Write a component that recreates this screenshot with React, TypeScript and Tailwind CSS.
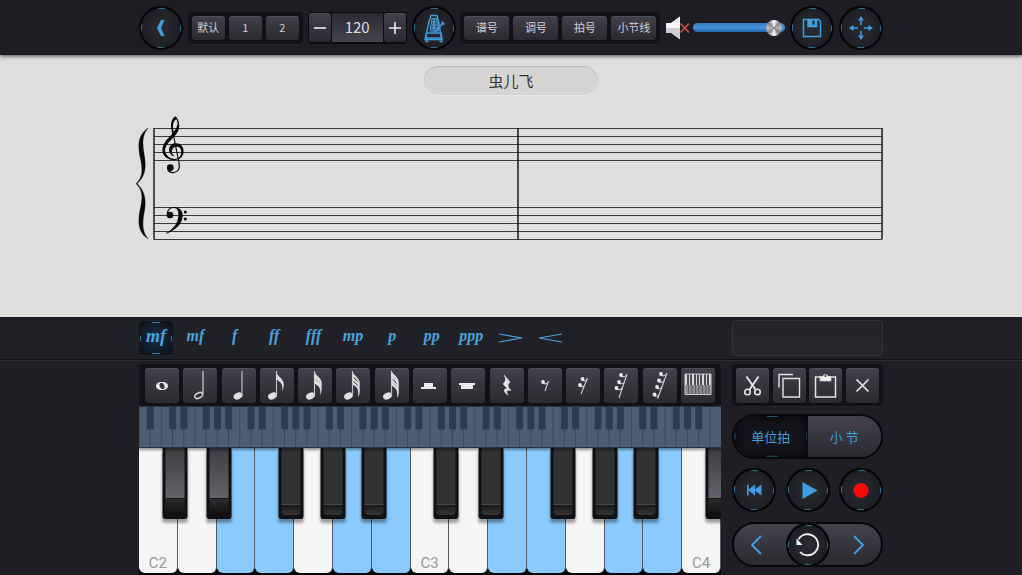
import { ReactNode, useState } from "react";

const PANEL = "rounded bg-[#111116] shadow-[0_1px_0_rgba(255,255,255,0.04)]";
const KEYCAP =
  "flex items-center justify-center rounded-[3px] bg-linear-to-b from-[#42414c] to-[#2b2a31] text-[#cfcfd4] shadow-[inset_0_1px_0_rgba(255,255,255,0.08)]";
const BLUE = "#3f9fdf";

const RoundButton = ({ label, children }: { label: string; children: ReactNode }) => (
  <button aria-label={label} className="size-11 shrink-0 rounded-full bg-radial from-[#2b2c32] to-[#17181d]">
    <svg viewBox="0 0 44 44" className="size-11" fill="none">
      <circle cx="22" cy="22" r="20.8" stroke="#050507" strokeWidth="2.2" />
      <circle
        cx="22"
        cy="22"
        r="19.6"
        stroke="#37729a"
        strokeWidth="1"
        strokeDasharray="7 23.8"
        strokeDashoffset="3.5"
      />
      {children}
    </svg>
  </button>
);

const TextButtons = ({ items, width }: { items: string[]; width: string }) => (
  <div className={`flex h-8 shrink-0 items-center gap-1 px-1 ${PANEL}`}>
    {items.map((item) => (
      <button key={item} className={`${KEYCAP} ${width} h-6 text-[11px]`}>
        {item}
      </button>
    ))}
  </div>
);

const Toolbar = () => {
  const [tempo, setTempo] = useState(120);
  const [volume, setVolume] = useState(96);

  return (
    <header className="relative z-10 bg-[#1e1d23] shadow-[0_1px_4px_rgba(0,0,0,0.7)]">
      <div className="mx-auto flex h-[55px] w-full max-w-[744px] items-center justify-between">
        <RoundButton label="返回">
          <path d="M22 14h3.5l-3.500 8 3.500 8H22l-4-8z" fill={BLUE} />
        </RoundButton>
        <TextButtons items={["默认", "1", "2"]} width="w-[33px]" />
        <div className="flex h-8 shrink-0 items-center gap-px rounded bg-[#0c0c10] p-px">
          <button
            aria-label="减速"
            className={`${KEYCAP} h-[29px] w-[22px]`}
            onClick={() => setTempo(tempo - 1)}
          >
            <svg viewBox="0 0 14 14" className="size-3.5" stroke="#ececee" strokeWidth="1.6">
              <path d="M1 7h12" />
            </svg>
          </button>
          <output className="grid h-[29px] w-[51px] place-items-center bg-linear-to-b from-[#2c2b33] to-[#45444f] text-[15px] text-[#dedee2]">
            {tempo}
          </output>
          <button
            aria-label="加速"
            className={`${KEYCAP} h-[29px] w-[22px]`}
            onClick={() => setTempo(tempo + 1)}
          >
            <svg viewBox="0 0 14 14" className="size-3.5" stroke="#ececee" strokeWidth="1.6">
              <path d="M1 7h12M7 1v12" />
            </svg>
          </button>
        </div>
        <RoundButton label="节拍器">
          <g stroke={BLUE} strokeWidth="1.4" strokeLinejoin="round">
            <path d="M19 9.500h6l1.500 6L29.500 32h-16l3.500-16.500z" />
            <path d="M14.500 27h14.500l1 6.500h-17zM14 34v1.500h2.500M30 34v1.500h-2.500" />
            <path d="M20 12.500h4.500l2 12.500h-8.500z" fill="#28577a" strokeWidth="1" />
            <path d="M22 13v11M20.500 16h3M20 19h4M19.500 22h5" stroke="#7cc2ef" strokeWidth=".7" />
            <path d="M23 26l8-9M29.500 16l3 2.500" strokeWidth="1.7" />
          </g>
        </RoundButton>
        <TextButtons items={["谱号", "调号", "拍号", "小节线"]} width="w-[45px]" />
        <div className="flex shrink-0 items-center gap-[3px]">
          <button aria-label="静音">
            <svg viewBox="0 0 25 24" className="h-6 w-[25px]">
              <path d="M1 7h5l9-6.500v23L6 17H1z" fill="#cfcfcf" />
              <path d="M1 7h5l9-6.500v11.500H1z" fill="#f4f4f4" />
              <path d="M15.500 7.500l8.500 9M24 7.500l-8.500 9" stroke="#d2524b" strokeWidth="1.5" />
            </svg>
          </button>
          <input
            type="range"
            aria-label="音量"
            min={0}
            max={100}
            value={volume}
            onChange={(e) => setVolume(Number(e.target.value))}
            className="h-[9px] w-[92px] appearance-none rounded-full bg-linear-to-b from-[#3478bb] via-[#4794dc] to-[#2465b0] [&::-webkit-slider-thumb]:size-4 [&::-webkit-slider-thumb]:appearance-none [&::-webkit-slider-thumb]:rounded-full [&::-webkit-slider-thumb]:bg-[conic-gradient(#fff,#888_45deg,#bbb_90deg,#777_135deg,#fff_180deg,#888_225deg,#bbb_270deg,#888_315deg,#fff)]"
          />
        </div>
        <RoundButton label="保存">
          <g stroke={BLUE} strokeWidth="1.5">
            <path d="M13.500 13.500h15l2 2v15h-17z" />
            <path d="M18 14v6.500h8.500V14" fill={BLUE} />
            <path d="M23.500 14.500v4" stroke="#14202c" strokeWidth="2" />
          </g>
        </RoundButton>
        <RoundButton label="移动">
          <path
            d="M22 10l3 4.500h-6zM22 34l3-4.500h-6zM10 22l4.500-3v6zM34 22l-4.500-3v6z"
            fill={BLUE}
          />
          <path d="M22 14v5M22 25v5M14 22h5M25 22h5" stroke={BLUE} strokeWidth="1.5" />
        </RoundButton>
      </div>
    </header>
  );
};

const Score = () => (
  <section className="flex flex-col items-center bg-linear-to-b from-[#dfdedc] to-[#e1e0de] pt-[11px] pb-[75px]">
    <input
      aria-label="曲名"
      defaultValue="虫儿飞"
      className="h-[29px] w-[174px] rounded-full bg-[#d6d5d3] text-center text-[15px] text-[#333] shadow-[inset_0_1px_1px_rgba(0,0,0,0.15),0_1px_0_rgba(255,255,255,0.3)]"
    />
    <svg viewBox="136 115 750 127" className="mt-5 w-full max-w-[750px]" role="img" aria-label="五线谱">
      <g stroke="#3a3a3a" strokeWidth="1">
        {[128, 136, 144, 152, 160, 207, 215, 223, 231, 239].map((y) => (
          <path key={y} d={`M154 ${y + 0.5}H882`} />
        ))}
      </g>
      <path d="M154 128V239.500M518 128V239.500M882 128V239.500" stroke="#1c1c1c" strokeWidth="1.5" />
      {/* clefs and brace are drawn on a grid three times finer than the staff */}
      <g transform="translate(130 60) scale(.33333)" fill="#0a0a0a">
        <path
          d="M55 204C36 224 37 250 42 280C49 320 48 345 22 371C48 397 49 425 42 460C37 490 36 516 55 537C26 520 23 490 29 455C37 420 42 392 18 371C42 350 37 320 29 285C23 250 26 222 55 204Z"
          stroke="#0a0a0a"
        />
        <path
          fillRule="evenodd"
          d="M136 169C148 178 151 200 144 214C138 227 126 236 117 247C105 261 102 272 109 283C117 296 132 299 143 295C155 290 156 272 150 264C145 259 138 259 133 262C124 267 124 281 131 286C134 288 133 290 129 288C115 282 113 262 124 254C135 246 152 249 158 261C164 274 160 293 146 298C130 304 108 299 100 283C94 268 98 254 110 239C118 230 124 224 127 221C120 198 122 177 136 169ZM139 178C129 183 127 198 131 215C142 202 146 190 139 178Z"
        />
        <path
          d="M129 219L147 308C151 328 143 337 130 338C121 338 114 333 113 325"
          fill="none"
          stroke="#0a0a0a"
          strokeWidth="3.5"
        />
        <circle cx="121" cy="323" r="10" />
        <path d="M111 466C109 450 118 441 132 441C150 441 159 453 158 468C157 492 137 510 109 521L108 519C130 507 144 490 145 467C146 452 141 444 131 444C122 444 115 450 115 458Z" />
        <circle cx="120" cy="465" r="10" />
        <circle cx="166" cy="456" r="4.5" />
        <circle cx="166" cy="477" r="4.5" />
      </g>
    </svg>
  </section>
);

const dynamics = ["mf", "mf", "f", "ff", "fff", "mp", "p", "pp", "ppp"];

const Dynamics = () => (
  <div className="flex w-full max-w-[428px] items-center justify-between">
    {dynamics.map((mark, i) =>
      i === 0 ? (
        <button
          key={i}
          className="relative size-[34px] rounded bg-radial from-[#17324a] to-[#0c0d12] pb-1 font-['Liberation_Serif',serif] text-[18px] leading-none font-bold text-[#4aa3de] italic"
        >
          {mark}
          <svg viewBox="0 0 34 34" className="absolute inset-0" stroke="#37729a">
            <path d="M13 1.500h8M13 32.500h8M1.500 15v5M32.500 15v5" />
          </svg>
        </button>
      ) : (
        <button
          key={i}
          className="h-[34px] w-[34px] pb-1 font-['Liberation_Serif',serif] text-[16px] leading-none font-bold text-[#4aa3de] italic"
        >
          {mark}
        </button>
      ),
    )}
    <button aria-label="渐弱" className="grid size-[34px] place-items-center">
      <svg viewBox="0 0 24 10" className="h-2.5 w-6" stroke="#4aa3de" strokeWidth="1.2" fill="none">
        <path d="M0 1l23 4-23 4" />
      </svg>
    </button>
    <button aria-label="渐强" className="grid size-[34px] place-items-center">
      <svg viewBox="0 0 24 10" className="h-2.5 w-6" stroke="#4aa3de" strokeWidth="1.2" fill="none">
        <path d="M24 1L1 5l23 4" />
      </svg>
    </button>
  </div>
);

const NoteHead = ({ x }: { x: number }) => (
  <ellipse cx={x} cy="28" rx="4.6" ry="3.2" transform={`rotate(-25 ${x} 28)`} fill="#e0e0e0" />
);

const Flagged = ({ flags }: { flags: number[] }) => (
  <>
    <NoteHead x={12.5} />
    <path d="M16.500 3v25" stroke="#bdbdbd" strokeWidth="1.2" />
    {flags.map((y) => (
      <path
        key={y}
        d={`M16.500 ${y}c.5 4 6 6 7 10.500c.6 3 0 6-1.500 ${flags.length > 2 ? 7 : 9}c.8-5 .5-9-5.500-12z`}
        fill="#dedede"
      />
    ))}
  </>
);

const Rest = ({ dots, stem }: { dots: [number, number][]; stem: [number, number, number, number] }) => {
  const [x1, y1, x2, y2] = stem;
  const at = (y: number) => x1 + ((x2 - x1) * (y - y1)) / (y2 - y1);
  return (
    <g stroke="#cfcfcf" strokeWidth="1.1" fill="none">
      <path d={`M${x1} ${y1}L${x2} ${y2}`} />
      {dots.map(([x, y]) => (
        <g key={y}>
          <path d={`M${x} ${y + 1}Q${x + 3} ${y + 3} ${at(y)} ${y}`} />
          <circle cx={x} cy={y} r="1.9" fill="#ececec" stroke="none" />
        </g>
      ))}
    </g>
  );
};

const notes: [string, ReactNode][] = [
  [
    "全音符",
    <path
      fillRule="evenodd"
      fill="#ececec"
      d="M17 14c4 0 6 1.800 6 4s-2 4-6 4-6-1.800-6-4 2-4 6-4zm-.6.800c-2 .2-2.400 1.800-1.600 3.700.8 1.800 2 2.700 3.200 2.600 1.600-.2 2-1.700 1.200-3.700-.7-1.800-1.700-2.700-2.800-2.600z"
    />,
  ],
  [
    "二分音符",
    <g fill="none" stroke="#d0d0d0">
      <path d="M20 3v23" strokeWidth="1.2" />
      <ellipse cx="15.7" cy="27.5" rx="4.2" ry="2.5" transform="rotate(-27 15.700 27.500)" strokeWidth="1.5" />
    </g>,
  ],
  [
    "四分音符",
    <>
      <NoteHead x={16} />
      <path d="M20 3v25" stroke="#bdbdbd" strokeWidth="1.2" />
    </>,
  ],
  ["八分音符", <Flagged flags={[4]} />],
  ["十六分音符", <Flagged flags={[3, 8]} />],
  ["三十二分音符", <Flagged flags={[3, 7, 11]} />],
  ["六十四分音符", <Flagged flags={[2, 5, 9, 12]} />],
  ["二分休止符", <path d="M11 15h9v4h3v2H8v-2h3z" fill="#ececec" />],
  ["全休止符", <path d="M8 15h16v2h-2v4H10v-4H8z" fill="#ececec" />],
  [
    "四分休止符",
    <path
      d="M14 7l6 7c-3 3-2.500 5 1 8.500-4-1-5.500.5-3 4.500-5-3-5-7 0-6l-5-5c3-3 3.500-5 1-9z"
      fill="#e6e6e6"
      stroke="#e6e6e6"
      strokeWidth=".6"
    />,
  ],
  ["八分休止符", <Rest dots={[[15, 14]]} stem={[20.5, 13, 17, 23]} />],
  ["十六分休止符", <Rest dots={[[16.5, 11], [14, 17]]} stem={[21.5, 10, 15, 26]} />],
  ["三十二分休止符", <Rest dots={[[17, 7], [15, 14], [12.5, 20]]} stem={[23, 6, 15, 30]} />],
  ["六十四分休止符", <Rest dots={[[18, 6], [16, 12.5], [14, 19], [11.5, 26.5]]} stem={[24, 5, 14.5, 31]} />],
  [
    "键盘",
    <>
      <path d="M4 6h26v20.500H4z" fill="#dcdcde" />
      <path d="M4 17h26v9.500H4z" fill="#8b8a90" />
      <path
        d="M7.500 17v9M11 17v9M14.500 17v9M18 17v9M21.500 17v9M25 17v9M28 17v9"
        stroke="#5c5b62"
        strokeWidth="1"
      />
      <path
        d="M7 6v11M10 6v11M14 6v11M17 6v11M20 6v11M24 6v11M27 6v11"
        stroke="#1c1b20"
        strokeWidth="1.5"
      />
      <path d="M4 6h26v20.500H4z" fill="none" stroke="#c8c8cb" strokeWidth="1" />
    </>,
  ],
];

const NotePalette = () => (
  <div className={`flex h-[42px] items-center justify-between px-1.5 ${PANEL}`}>
    {notes.map(([label, glyph]) => (
      <button key={label} aria-label={label} className={`${KEYCAP} h-[35px] w-[34px]`}>
        <svg viewBox="0 0 34 35" className="h-[35px] w-[34px]">
          {glyph}
        </svg>
      </button>
    ))}
  </div>
);

// the overview runs over 88 keys, from A0 to C8
const overviewWhite = Array.from({ length: 52 }, (_, i) => i);
const overviewBlack = overviewWhite.filter((i) => i > 0 && ![2, 5].includes(i % 7));

const Overview = () => (
  <svg
    viewBox="0 0 520 41"
    preserveAspectRatio="none"
    className="h-[42px] w-full border-y border-[#28344a] bg-[#505c70]"
  >
    {overviewWhite.map((i) => (
      <path key={i} d={`M${i * 10} 0v41`} stroke="#36445a" strokeWidth=".8" />
    ))}
    {overviewBlack.map((i) => (
      <rect key={i} x={i * 10 - 3} y="0" width="6.2" height="23" fill="#2d3a50" />
    ))}
  </svg>
);

const whiteKeys = "C2 D2 E2 F2 G2 A2 B2 C3 D3 E3 F3 G3 A3 B3 C4".split(" ");
const inScale = ["E", "F", "A", "B"];
const blackOffsets = [0.131, 0.2946, 0.56, 0.714, 0.867];
const blackKeys = Array.from({ length: 11 }, (_, i) => ({
  center: ((Math.floor(i / 5) + blackOffsets[i % 5]) * 7 * 100) / 15,
  bright: i < 2 || i === 10,
}));

const Piano = () => (
  <div className="relative flex min-h-[120px] flex-1 overflow-hidden bg-black pb-0.5">
    {whiteKeys.map((key) => (
      <button
        key={key}
        aria-label={key}
        className={`flex flex-1 items-end justify-center rounded-b-md border-r border-[#565b62] pb-0.5 font-[Roboto,sans-serif] text-[15px] leading-4 text-[#999] ${
          inScale.includes(key[0]) ? "bg-[#8bcaff]" : "bg-[#f5f5f5]"
        }`}
      >
        {key[0] === "C" && key}
      </button>
    ))}
    {blackKeys.map(({ center, bright }) => (
      <button
        key={center}
        aria-label="黑键"
        className="absolute top-0 flex h-[56%] w-[25px] -translate-x-1/2 flex-col rounded-b-[3px] bg-[#111113] px-[3px] pb-1 shadow-[0_4px_3px_rgba(0,0,0,0.35)]"
        style={{ left: `${center}%` }}
      >
        <span
          className={`w-full flex-1 border-b ${
            bright
              ? "border-[#17171a] bg-linear-to-b from-[#3d3d42] to-[#63636a]"
              : "border-[#47484a] bg-[#303133]"
          }`}
        />
        <span
          className={`w-full rounded-b-sm bg-linear-to-b ${
            bright ? "h-4 from-[#2e2e30] to-[#0e0e10]" : "h-2.5 from-[#1a1a1c] to-[#353538]"
          }`}
        />
      </button>
    ))}
    <div className="pointer-events-none absolute inset-x-0 top-0 h-1 bg-linear-to-b from-black/40 to-transparent" />
  </div>
);

const EditTools = () => (
  <div className={`flex h-[42px] items-center justify-between px-1 ${PANEL}`}>
    <button aria-label="剪切" className={`${KEYCAP} h-[35px] w-[33px]`}>
      <svg viewBox="0 0 33 35" className="h-[35px] w-[33px]" fill="none" stroke="#e4e4e4" strokeWidth="1.6">
        <circle cx="11.5" cy="24" r="2.8" />
        <circle cx="21.5" cy="24" r="2.8" />
        <path d="M10.500 8.500L19.800 22M22.500 8.500L13.200 22" strokeWidth="1.9" />
      </svg>
    </button>
    <button aria-label="复制" className={`${KEYCAP} h-[35px] w-[33px]`}>
      <svg viewBox="0 0 33 35" className="h-[35px] w-[33px]" fill="none" stroke="#e4e4e4" strokeWidth="1.4">
        <path d="M10 10.500h16.500v18.500H10z" />
        <path d="M6 19.500V6.500h14" />
      </svg>
    </button>
    <button aria-label="粘贴" className={`${KEYCAP} h-[35px] w-[33px]`}>
      <svg viewBox="0 0 33 35" className="h-[35px] w-[33px]" fill="none" stroke="#e4e4e4" strokeWidth="1.5">
        <path d="M6.500 9h20v20h-20z" />
        <path d="M11.500 9h3a2 2 0 0 1 4 0h3v3.500h-10z" fill="#f4f4f4" />
        <circle cx="16.5" cy="8" r="1" fill="#333" stroke="none" />
      </svg>
    </button>
    <button aria-label="删除" className={`${KEYCAP} h-[35px] w-[33px]`}>
      <svg viewBox="0 0 33 35" className="h-[35px] w-[33px]" stroke="#e4e4e4" strokeWidth="1.7">
        <path d="M10.500 11.500l12 12M22.500 11.500l-12 12" />
      </svg>
    </button>
  </div>
);

const Transport = () => (
  <div className="flex flex-col">
    <EditTools />
    <div className="mt-2 flex h-[45px] overflow-hidden rounded-full border-2 border-[#08080b] text-[13px] text-[#3f9fdf] [text-shadow:0_0_6px_#1d5f96]">
      <button className="relative flex-1 bg-[#131419] shadow-[inset_0_0_8px_#000]">
        单位拍
        <svg viewBox="0 0 74 41" className="absolute inset-0" stroke="#285674" fill="none">
          <path d="M33 .5h11M33 40.500h11M1 17v7M73.500 17v7" />
        </svg>
      </button>
      <button className="flex-1 bg-linear-to-b from-[#44434d] to-[#2b2a31]">小 节</button>
    </div>
    <div className="mt-[9px] flex justify-between">
      <RoundButton label="回到开头">
        <path
          d="M15 16.500h1.600v5l6.400-5v5l6.500-5v11l-6.500-5v5l-6.400-5v5H15z"
          fill={BLUE}
        />
      </RoundButton>
      <RoundButton label="播放">
        <path d="M16.500 14l15 8.500-15 8.500z" fill={BLUE} />
      </RoundButton>
      <RoundButton label="录音">
        <circle cx="22" cy="22.5" r="7.5" fill="#fb0707" />
      </RoundButton>
    </div>
    <div className="mt-2.5 flex h-[45px] items-center justify-between rounded-full border-2 border-[#08080b] bg-linear-to-b from-[#44434d] to-[#2b2a31]">
      <button aria-label="上一个" className="flex flex-1 justify-center pr-2">
        <svg viewBox="0 0 12 20" className="h-5 w-3" fill="none" stroke={BLUE} strokeWidth="1.9">
          <path d="M11 1L2 10l9 9" />
        </svg>
      </button>
      <RoundButton label="撤销">
        <path d="M12.500 27.500a10.500 10.500 0 1 0 1.500-12.500" stroke="#f0f0f0" strokeWidth="1.8" transform="matrix(1 0 0 -1 0 44)" />
        <path d="M10.500 15.500v6.500h6z" fill="#f0f0f0" />
      </RoundButton>
      <button aria-label="下一个" className="flex flex-1 justify-center pl-2">
        <svg viewBox="0 0 12 20" className="h-5 w-3" fill="none" stroke={BLUE} strokeWidth="1.9">
          <path d="M1 1l9 9-9 9" />
        </svg>
      </button>
    </div>
  </div>
);

const App = () => (
  <div className="flex min-h-screen flex-col bg-[#1f1e24] font-['Noto_Sans_CJK_SC',sans-serif]">
    <Toolbar />
    <Score />
    <section className="border-b border-[#111115] bg-[#202127] shadow-[0_1px_0_#2a2a31]">
      <div className="mx-auto grid h-[42px] w-full max-w-[744px] grid-cols-[1fr_151px] items-center gap-x-[11px]">
        <Dynamics />
        <div className="h-9 rounded border border-[#34343b] bg-linear-to-b from-[#222328] to-[#27282d]" />
      </div>
    </section>
    <main className="mx-auto grid w-full max-w-[744px] flex-1 grid-cols-[1fr_151px] gap-x-[11px] pt-1">
      <div className="flex flex-col">
        <NotePalette />
        <Overview />
        <Piano />
      </div>
      <Transport />
    </main>
  </div>
);

export default App;
